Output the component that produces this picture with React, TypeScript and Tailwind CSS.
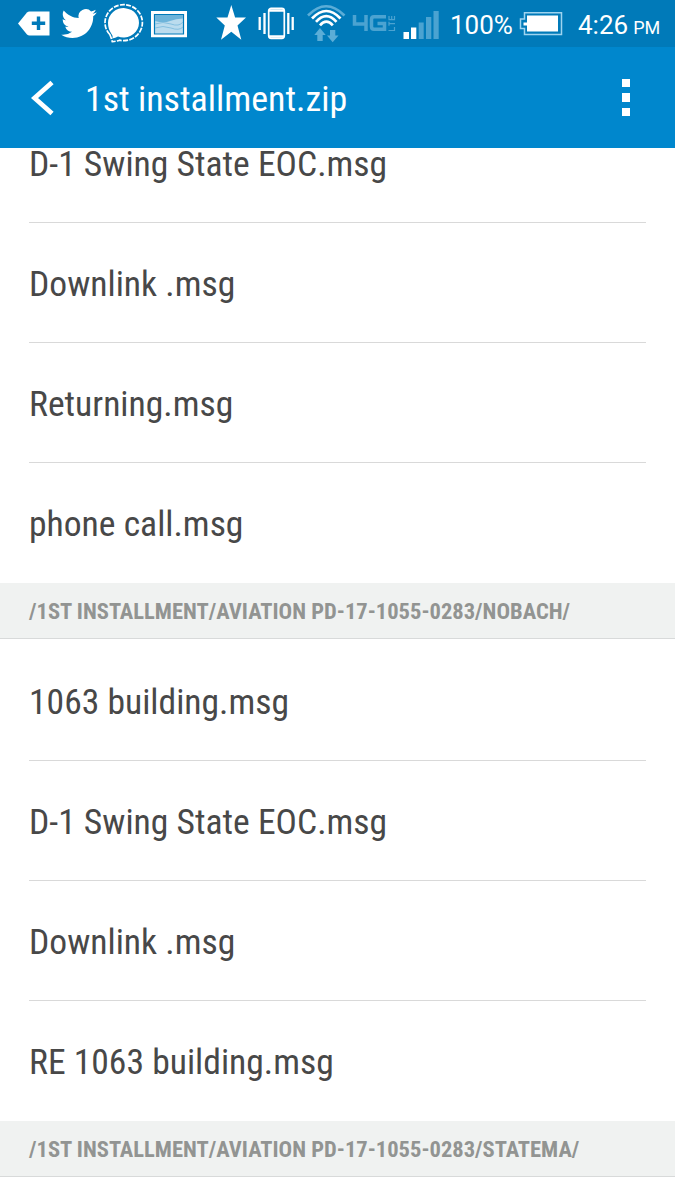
const condensed = "font-['Roboto_Condensed','Roboto',sans-serif] font-stretch-condensed"

const StatusBar = () => {
    return (
        <div className="flex h-[47px] w-full flex-row items-center bg-[#007ab9]">
            <svg className="h-[47px] w-[450px] shrink-0" viewBox="0 0 450 47" fill="none">
                {/* tag with plus */}
                <path d="M18 23.5 27 12.5Q28 11.5 29.5 11.5H49.5V35.5H29.5Q28 35.5 27 34.5Z" fill="#fff" />
                <path d="M38.5 16.5V30M31.8 23.3H45.2" stroke="#007ab9" strokeWidth="3.4" />
                {/* bird */}
                <path
                    transform="translate(61.3 5.8) scale(1.48)"
                    fill="#fff"
                    d="M23.953 4.57a10 10 0 01-2.825.775 4.958 4.958 0 002.163-2.723c-.951.555-2.005.959-3.127 1.184a4.92 4.92 0 00-8.384 4.482C7.69 8.095 4.067 6.13 1.64 3.162a4.822 4.822 0 00-.666 2.475c0 1.71.87 3.213 2.188 4.096a4.904 4.904 0 01-2.228-.616v.06a4.923 4.923 0 003.946 4.827 4.996 4.996 0 01-2.212.085 4.936 4.936 0 004.604 3.417 9.867 9.867 0 01-6.102 2.105c-.39 0-.779-.023-1.17-.067a13.995 13.995 0 007.557 2.209c9.053 0 13.998-7.496 13.998-13.985 0-.21 0-.42-.015-.63A9.935 9.935 0 0024 4.59z"
                />
                {/* chat bubble */}
                <path d="M111.500 34Q108 29 108 23A15.5 14.7 0 1 1 118 36.500Q115.500 38 112 38.500Q113.500 36.500 111.500 34Z" fill="#fff" />
                <path d="M109.800 34.500Q105 29.500 105 22.500A18.700 18 0 1 1 119.500 40.200Q116 41.500 112.300 41.700Q111.500 38.500 109.800 34.500Z" stroke="#fff" strokeWidth="1.700" strokeDasharray="5 1.300" />
                {/* picture */}
                <path d="M151 11H187V37.200H151Z" fill="#fff" />
                <path d="M154.500 14.500H183.500V34H154.500Z" fill="#bbdcee" stroke="#007ab9" strokeWidth="1.200" />
                <path d="M155 15H183V18.500Q176 18.500 170 21T155 21Z" fill="#6db4da" />
                <path d="M155 24Q163 21 171 24T183 22M155 28Q163 25 171 28T183 27" stroke="#85c0e0" strokeWidth="1" />
                {/* star */}
                <path d="M231.300 5 235.100 17.500H246L237.500 25.500 241.300 39.700 231.300 31.700 221 39.700 224.800 25.500 216.300 17.500H227.500Z" fill="#fff" />
                {/* vibrate */}
                <rect x="268.700" y="8.300" width="15.600" height="30" rx="2.500" stroke="#fff" strokeWidth="1.700" />
                <path d="M269 10.500H284M269 36.500H284" stroke="#fff" strokeWidth="2.500" />
                <path d="M264.500 13V34M288.300 13V34" stroke="#fff" strokeWidth="2.300" />
                <path d="M259.700 17V30M292.700 17V30" stroke="#fff" strokeWidth="2.300" />
                {/* wifi with arrows */}
                <path d="M308 15.500Q326 -3 344.500 15.500" stroke="#5badd7" strokeWidth="2.600" />
                <path d="M312 18.500Q326.300 3.500 340.500 18.500M316 21.800Q326.300 10.500 336.500 21.800M320 25.300Q326.300 18 332.800 25.300" stroke="#fff" strokeWidth="2.700" />
                <path d="M320 28 325.700 35H322.700V41H317.300V35H314.300ZM332.700 42.300 338.500 35.500H335.300V30H330V35.500H327Z" fill="#5badd7" />
                {/* 4G LTE */}
                <path d="M354.500 15V24H366M366 15V31M386 16.700H374Q371.500 16.700 371.500 19.200V26.800Q371.500 29.300 374 29.300H384.500V23.500H377.500" stroke="#4ba3d1" strokeWidth="3.500" />
                <path d="M388.500 30.500H394.500V27M389 21.700V25.700M389 23.700H395M389 16V19.700H394.500V16M391.700 16V19.700" stroke="#4ba3d1" strokeWidth="1.200" />
                {/* signal */}
                <path d="M403.500 32H409V39H403.500ZM411 27.500H416.300V39H411Z" fill="#fff" />
                <path d="M418.700 22.500H423.700V39H418.700ZM426 17H431.300V39H426ZM433.500 11H438.700V39H433.500Z" fill="#4ba3d1" />
            </svg>
            <span className="mt-[3px] w-[69px] shrink-0 font-['Roboto',sans-serif] text-[26px] leading-none whitespace-nowrap text-white">100%</span>
            <svg className="h-[47px] w-[59px] shrink-0" viewBox="0 0 59 47" fill="none">
                <path d="M5.500 12.800H42.500V34.500H5.500V28.500H1.500V19H5.500Z" stroke="#9ed4ef" strokeWidth="1.500" />
                <path d="M8 15.500H39V31.500H8V25.500H4.500V22.500H8Z" fill="#fff" />
            </svg>
            <span className="mt-[3px] shrink-0 font-['Roboto',sans-serif] text-[26px] leading-none whitespace-nowrap text-white">4:26</span>
            <span className="mt-[8px] ml-[5px] shrink-0 font-['Roboto',sans-serif] text-[18px] leading-none whitespace-nowrap text-white">PM</span>
        </div>
    )
}

const TitleBar = () => {
    return (
        <header className="flex h-[101px] w-full flex-row items-center bg-[#0087cd] pr-[45px] pl-[31px] text-white">
            <button className="h-[36px] w-[24px]">
                <svg viewBox="0 0 24 36" fill="none" stroke="#fff" strokeWidth="4.800">
                    <path d="M21 2.500 3.500 18 21 33.500" />
                </svg>
            </button>
            <h1 className={`${condensed} mt-[5px] ml-[30px] flex-1 text-[35.900px] leading-none whitespace-nowrap`}>1st installment.zip</h1>
            <button className="flex flex-col gap-[6px]">
                <span className="h-[8.500px] w-[8.500px] bg-white"></span>
                <span className="h-[8.500px] w-[8.500px] bg-white"></span>
                <span className="h-[8.500px] w-[8.500px] bg-white"></span>
            </button>
        </header>
    )
}

const FileRow = ({ name, last }: { name: string; last: boolean }) => {
    return (
        <li className={`mx-[29px] flex h-[120px] items-center border-b ${last ? "border-transparent" : "border-[#d9d9d9]"}`}>
            <span className={`${condensed} mt-[3px] text-[35.600px] leading-[30px] whitespace-nowrap text-[#484848]`}>{name}</span>
        </li>
    )
}

const FileList = ({ files }: { files: string[] }) => {
    return (
        <ul className="pt-[2px]">
            {files.map((name, i) => (
                <FileRow key={name} name={name} last={i === files.length - 1} />
            ))}
        </ul>
    )
}

const FolderHeader = ({ path }: { path: string }) => {
    return (
        <div className="flex h-[56px] items-center border-b border-[#d8dada] bg-[#f0f2f1] px-[29px]">
            <h2 className={`${condensed} mt-[4px] text-[22.550px] leading-none font-bold whitespace-nowrap text-[#929492]`}>{path}</h2>
        </div>
    )
}

export default function App() {
    return (
        <div className="flex h-[1200px] w-[675px] flex-col overflow-hidden bg-white">
            <StatusBar />
            <TitleBar />
            <main className="flex-1 overflow-hidden">
                {/* list is scrolled, first row sits partly under the title bar */}
                <div className="-mt-[47px]">
                    <FileList files={["D-1 Swing State EOC.msg", "Downlink .msg", "Returning.msg", "phone call.msg"]} />
                    <FolderHeader path="/1ST INSTALLMENT/AVIATION PD-17-1055-0283/NOBACH/" />
                    <FileList files={["1063 building.msg", "D-1 Swing State EOC.msg", "Downlink .msg", "RE 1063 building.msg"]} />
                    <FolderHeader path="/1ST INSTALLMENT/AVIATION PD-17-1055-0283/STATEMA/" />
                </div>
            </main>
        </div>
    )
}
